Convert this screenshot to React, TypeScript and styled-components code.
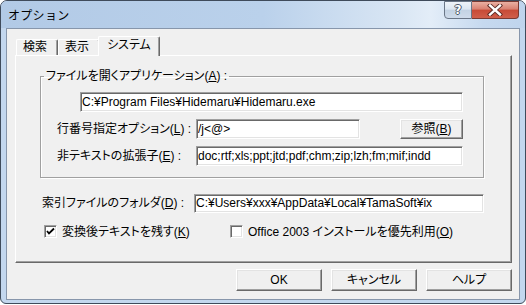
import React from "react";
import styled, { createGlobalStyle } from "styled-components";

const GlobalStyle = createGlobalStyle`
  html, body { margin: 0; padding: 0; background: #ffffff; }
  body {
    width: 526px; height: 305px; overflow: hidden;
    font-family: "Liberation Sans", "Noto Sans CJK JP", sans-serif;
    font-size: 12px; color: #000;
    font-feature-settings: "palt";
  }
  * { box-sizing: border-box; }
`;

const Window = styled.div`
  width: 526px;
  height: 304px;
  border: 1px solid #3f4b5b;
  border-radius: 7px 7px 6px 6px;
  background: #c3d7ee;
  display: flex;
  flex-direction: column;
  overflow: hidden;
`;

const TitleBar = styled.div`
  height: 27px;
  flex: none;
  display: flex;
  justify-content: space-between;
  align-items: flex-start;
  padding: 0 6px 0 7px;
  background: linear-gradient(90deg, #b2cae6 0%, #bad1eb 50%, #d9e6f4 76%, #e3edf8 82%, #c6d9ef 92%, #bfd4ed 100%);
`;

const TitleText = styled.div`
  padding-top: 8px;
  font-size: 12px;
  line-height: 14px;
  font-feature-settings: normal;
  letter-spacing: 0.3px;
`;

const CaptionGroup = styled.div`
  display: flex;
`;

const HelpButton = styled.div`
  width: 28px;
  height: 18px;
  border: 1px solid #6a7687;
  border-radius: 0 0 0 4px;
  background: linear-gradient(#eef3f9 0%, #dce6f1 45%, #c3d2e3 50%, #cfdbea 100%);
  display: flex;
  align-items: center;
  justify-content: center;
  color: #fff;
  font-family: "DejaVu Sans", sans-serif;
  font-weight: bold;
  font-size: 12px;
  line-height: 14px;
  text-shadow: 1px 0 #4c5869, -1px 0 #4c5869, 0 1px #4c5869, 0 -1px #4c5869;
`;

const CloseButton = styled.div`
  width: 47px;
  height: 18px;
  border: 1px solid #7a3a32;
  border-left: none;
  border-radius: 0 0 4px 0;
  background: linear-gradient(#eab0a2 0%, #d98070 45%, #c74a36 50%, #d05e4a 100%);
  display: flex;
  align-items: center;
  justify-content: center;
`;

const Client = styled.div`
  flex: 1;
  margin: 0 5px 3px 5px;
  border: 1px solid #8796ab;
  background: #f0f0f0;
  padding: 7px 7px 8px 8px;
  display: flex;
  flex-direction: column;
`;

const TabStrip = styled.div`
  height: 19px;
  flex: none;
  display: flex;
  align-items: flex-end;
  padding-left: 1px;
`;

const Tab = styled.div<{ $active?: boolean }>`
  position: relative;
  height: ${(p) => (p.$active ? 20 : 16)}px;
  margin: ${(p) => (p.$active ? "0 -2px -1px -2px" : "0")};
  padding: ${(p) => (p.$active ? "0 8px" : "0 10px 0 6px")};
  z-index: ${(p) => (p.$active ? 1 : 0)};
  background: #f0f0f0;
  border-top: 1px solid #ffffff;
  border-left: 1px solid #ffffff;
  border-right: 1px solid #696969;
  box-shadow: inset -1px 0 #a0a0a0;
  border-radius: 2px 2px 0 0;
  line-height: ${(p) => (p.$active ? 17 : 15)}px;
  white-space: nowrap;
`;

const Panel = styled.div`
  flex: 1;
  border-top: 1px solid #ffffff;
  border-left: 1px solid #ffffff;
  border-right: 1px solid #696969;
  border-bottom: 1px solid #696969;
  box-shadow: inset -1px -1px #a0a0a0;
  display: flex;
  flex-direction: column;
`;

const GroupBox = styled.fieldset`
  margin: 13px 0 0 24px;
  width: 444px;
  padding: 0;
  border: 1px solid #a0a0a0;
  box-shadow: inset 1px 1px #ffffff, 1px 1px #ffffff;
  min-inline-size: 0;
`;

const GroupLegend = styled.legend`
  margin-left: 3px;
  padding: 0 2px;
  line-height: 14px;
  white-space: nowrap;
`;

const GroupBody = styled.div`
  display: flex;
  flex-direction: column;
  gap: 7px;
  padding: 9px 20px 11px 16px;
`;

const Row = styled.div<{ $indent?: number; $top?: number }>`
  display: flex;
  align-items: center;
  height: 20px;
  margin-left: ${(p) => p.$indent ?? 0}px;
  margin-top: ${(p) => p.$top ?? 0}px;
`;

const FieldLabel = styled.div<{ $width: number }>`
  width: ${(p) => p.$width}px;
  flex: none;
  line-height: 14px;
  white-space: nowrap;
`;

const Field = styled.input<{ $width?: number; $height?: number }>`
  width: ${(p) => (p.$width ? `${p.$width}px` : "auto")};
  flex: ${(p) => (p.$width ? "none" : "1")};
  min-width: 0;
  height: ${(p) => p.$height ?? 20}px;
  margin: 0;
  padding: 0 0 0 1px;
  font: inherit;
  font-feature-settings: "palt";
  line-height: 14px;
  color: #000;
  background: #ffffff;
  border-style: solid;
  border-width: 1px;
  border-color: #a0a0a0 #ffffff #ffffff #a0a0a0;
  box-shadow: inset 1px 1px #696969, inset -1px -1px #e3e3e3;
  outline: none;
`;

const PushButton = styled.button<{ $width: number; $height: number }>`
  width: ${(p) => p.$width}px;
  height: ${(p) => p.$height}px;
  flex: none;
  margin: 0;
  padding: 0;
  font: inherit;
  font-feature-settings: "palt";
  line-height: 14px;
  color: #000;
  background: #f0f0f0;
  border-style: solid;
  border-width: 1px;
  border-color: #ffffff #696969 #696969 #ffffff;
  box-shadow: inset -1px -1px #a0a0a0, inset 1px 1px #e3e3e3;
  border-radius: 0;
`;

const BrowseButton = styled(PushButton)`
  margin-left: auto;
`;

const CheckRow = styled.div`
  display: flex;
  align-items: center;
  margin: 12px 0 0 28px;
  height: 13px;
`;

const CheckItem = styled.label<{ $width?: number }>`
  display: flex;
  align-items: center;
  gap: 5px;
  width: ${(p) => (p.$width ? `${p.$width}px` : "auto")};
  line-height: 14px;
  white-space: nowrap;
`;

const CheckBox = styled.span`
  width: 13px;
  height: 13px;
  flex: none;
  background: #ffffff;
  border-style: solid;
  border-width: 1px;
  border-color: #a0a0a0 #ffffff #ffffff #a0a0a0;
  box-shadow: inset 1px 1px #696969, inset -1px -1px #e3e3e3;
  display: flex;
  align-items: center;
  justify-content: center;
`;

const ButtonRow = styled.div`
  margin-top: 6px;
  display: flex;
  justify-content: flex-end;
  gap: 9px;
`;

const Key = styled.u`
  text-decoration: underline;
  text-underline-offset: 1px;
`;

const CheckMark = () => (
  <svg width="9" height="9" viewBox="0 0 9 9">
    <polyline points="1,4 3,6.5 8,1.5" fill="none" stroke="#000" strokeWidth="1.8" />
  </svg>
);

const CloseGlyph = () => (
  <svg width="16" height="12" viewBox="0 0 16 12">
    <path d="M3 1.5 L13 10.5 M13 1.5 L3 10.5" stroke="#5a2a24" strokeWidth="4.2" strokeLinecap="square" />
    <path d="M3 1.5 L13 10.5 M13 1.5 L3 10.5" stroke="#ffffff" strokeWidth="2.4" strokeLinecap="square" />
  </svg>
);

export default function App() {
  return (
    <>
      <GlobalStyle />
      <Window>
        <TitleBar>
          <TitleText>オプション</TitleText>
          <CaptionGroup>
            <HelpButton>?</HelpButton>
            <CloseButton>
              <CloseGlyph />
            </CloseButton>
          </CaptionGroup>
        </TitleBar>
        <Client>
          <TabStrip>
            <Tab>検索</Tab>
            <Tab>表示</Tab>
            <Tab $active>システム</Tab>
          </TabStrip>
          <Panel>
            <GroupBox>
              <GroupLegend>
                ファイルを開くアプリケーション(<Key>A</Key>) :
              </GroupLegend>
              <GroupBody>
                <Row $indent={23}>
                  <Field readOnly defaultValue="C:¥Program Files¥Hidemaru¥Hidemaru.exe" />
                </Row>
                <Row>
                  <FieldLabel $width={139}>
                    行番号指定オプション(<Key>L</Key>) :
                  </FieldLabel>
                  <Field $width={164} readOnly defaultValue="/j<@>" />
                  <BrowseButton $width={63} $height={20}>
                    参照(<Key>B</Key>)
                  </BrowseButton>
                </Row>
                <Row>
                  <FieldLabel $width={139}>
                    非テキストの拡張子(<Key>E</Key>) :
                  </FieldLabel>
                  <Field readOnly defaultValue="doc;rtf;xls;ppt;jtd;pdf;chm;zip;lzh;fm;mif;indd" />
                </Row>
              </GroupBody>
            </GroupBox>
            <Row $indent={26} $top={15}>
              <FieldLabel $width={152}>
                索引ファイルのフォルダ(<Key>D</Key>) :
              </FieldLabel>
              <Field $width={290} $height={19} readOnly defaultValue="C:¥Users¥xxx¥AppData¥Local¥TamaSoft¥ix" />
            </Row>
            <CheckRow>
              <CheckItem $width={186}>
                <CheckBox>
                  <CheckMark />
                </CheckBox>
                <span>
                  変換後テキストを残す(<Key>K</Key>)
                </span>
              </CheckItem>
              <CheckItem>
                <CheckBox />
                <span>
                  Office 2003 インストールを優先利用(<Key>O</Key>)
                </span>
              </CheckItem>
            </CheckRow>
          </Panel>
          <ButtonRow>
            <PushButton $width={86} $height={22}>OK</PushButton>
            <PushButton $width={86} $height={22}>キャンセル</PushButton>
            <PushButton $width={86} $height={22}>ヘルプ</PushButton>
          </ButtonRow>
        </Client>
      </Window>
    </>
  );
}
